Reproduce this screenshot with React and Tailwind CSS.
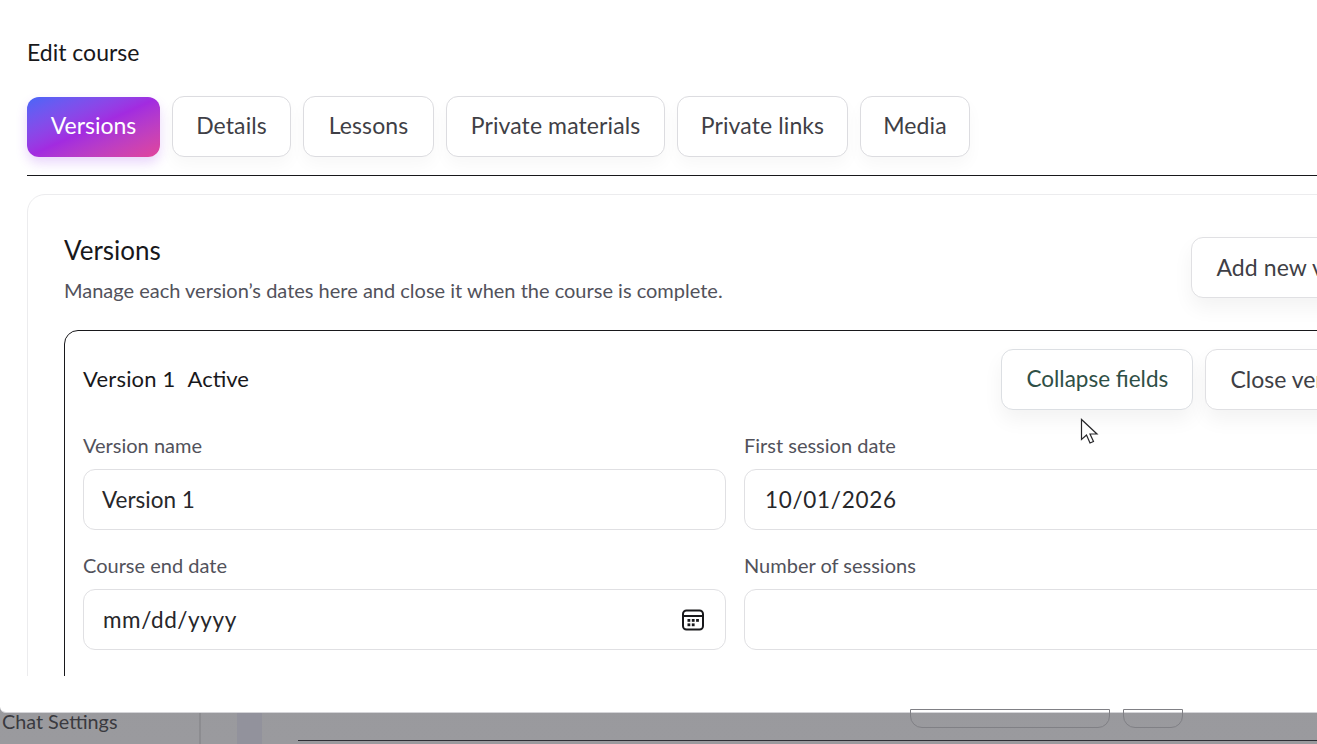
import React from 'react';

const font = { fontFamily: 'Lato, "Open Sans", sans-serif' };

const tabs = [
  { label: 'Details', width: 'w-[119px]' },
  { label: 'Lessons', width: 'w-[131px]' },
  { label: 'Private materials', width: 'w-[219px]' },
  { label: 'Private links', width: 'w-[171px]' },
  { label: 'Media', width: 'w-[110px]' },
];

const Field = ({ label, value, valueClassName, children }) => (
  <div className="flex flex-col">
    <label className="text-[20px] leading-[28px] text-[#52525b] mb-[10px]">{label}</label>
    <div className="h-[61px] rounded-[12px] border border-[#e0e0e3] bg-white flex items-center justify-between pl-[18px] pr-[20px] text-[22.5px] text-[#27272a]">
      <span className={valueClassName}>{value}</span>
      {children}
    </div>
  </div>
);

const CalendarIcon = () => (
  <svg width="24" height="24" viewBox="0 0 24 24" fill="none" stroke="#18181b" strokeWidth="2">
    <rect x="2" y="2.5" width="20" height="19" rx="3.5" />
    <path d="M2 8h20" />
    <g fill="#18181b" stroke="none">
      <rect x="6.5" y="11" width="2.8" height="2.8" />
      <rect x="10.8" y="11" width="2.8" height="2.8" />
      <rect x="15.1" y="11" width="2.8" height="2.8" />
      <rect x="6.5" y="15.4" width="2.8" height="2.8" />
      <rect x="10.8" y="15.4" width="2.8" height="2.8" />
    </g>
  </svg>
);

const Cursor = () => (
  <svg className="absolute left-[1080px] top-[418px]" width="20" height="28" viewBox="0 0 20 28" fill="white" stroke="#27272a" strokeWidth="1.2">
    <path d="M1.5 1.5v20l5-4.5 3.5 8 3.5-1.5-3.5-7.5h7z" />
  </svg>
);

export default function App() {
  return (
    <div className="relative h-[744px] w-[1317px] overflow-hidden bg-gradient-to-b from-[#929295] to-[#9a9a9e]" style={font}>
      <div className="h-[713px] bg-white rounded-bl-[6px] border-b border-[#d4d4d8] overflow-hidden">
        <div className="h-[676px] w-[1500px] overflow-hidden pl-[27px] pt-[35px]">
          <h2 className="text-[23px] leading-[34px] text-[#18181b]">Edit course</h2>

          <div className="mt-[27px] flex w-[1290px] gap-[12px] pb-[18px] border-b border-[#18181b]">
            <button className="mt-[1px] h-[60px] w-[133px] pb-[3px] rounded-[12px] text-[23px] text-white bg-gradient-to-br from-[#4466f8] via-[#a22be0] to-[#e2439a] shadow-[0_6px_12px_rgba(147,51,234,0.2)]">
              Versions
            </button>
            {tabs.map((t) => (
              <button key={t.label} className={`${t.width} h-[61px] pb-[3px] rounded-[12px] border border-[#dcdce0] bg-white text-[23px] tracking-[0.1px] text-[#3f3f46] shadow-[0_8px_16px_rgba(0,0,0,0.03)]`}>
                {t.label}
              </button>
            ))}
          </div>

          <div className="mt-[18px] w-[1421px] rounded-t-[18px] border border-[#ececee] px-[36px] pt-[40px] pb-[40px]">
            <div className="flex items-start justify-between">
              <div>
                <h3 className="text-[26px] leading-[30px] text-[#18181b]">Versions</h3>
                <p className="mt-[11px] text-[20px] leading-[28px] text-[#52525b]">Manage each version’s dates here and close it when the course is complete.</p>
              </div>
              <button className="mt-[2px] h-[61px] px-[24px] pb-[1px] rounded-[12px] border border-[#e0e0e3] bg-white text-[23px] tracking-[0.1px] text-[#3f3f46] shadow-[0_10px_20px_rgba(0,0,0,0.05)]">
                Add new version
              </button>
            </div>

            <div className="mt-[26px] rounded-t-[14px] border border-[#18181b] px-[18px] pt-[18px] pb-[30px]">
              <div className="flex items-center justify-between">
                <div className="flex gap-[12px] pb-[2px] text-[22px] text-[#18181b]">
                  <span className="tracking-[0.2px]">Version 1</span>
                  <span>Active</span>
                </div>
                <div className="flex gap-[12px] mr-[2px]">
                  <button className="h-[61px] w-[192px] pb-[1px] rounded-[12px] border border-[#dcdfe3] bg-white text-[22.5px] text-[#2f4f46] shadow-[0_10px_20px_rgba(0,0,0,0.05)]">
                    Collapse fields
                  </button>
                  <button className="h-[61px] px-[24px] pb-[1px] rounded-[12px] border border-[#e0e0e3] bg-white text-[23px] text-[#3f3f46] shadow-[0_10px_20px_rgba(0,0,0,0.05)]">
                    Close version
                  </button>
                </div>
              </div>

              <div className="mt-[21px] grid grid-cols-[643px_643px] gap-x-[18px] gap-y-[21px]">
                <Field label="Version name" value="Version 1" valueClassName="" />
                <Field label="First session date" value="10/01/2026" valueClassName="pl-[2px] tracking-[0.7px]" />
                <Field label="Course end date" value="mm/dd/yyyy" valueClassName="pl-[1px] tracking-[0.6px]">
                  <CalendarIcon />
                </Field>
                <Field label="Number of sessions" value="" />
              </div>
            </div>
          </div>
        </div>
      </div>

      <div className="relative h-[31px] text-[#3a3a40]">
        <span className="absolute left-[2px] top-[-6px] text-[19.8px] leading-[28px]">Chat Settings</span>
        <div className="absolute left-[199px] top-0 h-full w-[2px] bg-[#8c8c90]" />
        <div className="absolute left-[237px] top-0 h-full w-[25px] bg-[#92929c]" />
        <div className="absolute left-[910px] top-[-4px] h-[19px] w-[200px] rounded-b-[12px] border border-[#808085]" />
        <div className="absolute left-[1123px] top-[-4px] h-[19px] w-[60px] rounded-b-[12px] border border-[#808085]" />
        <div className="absolute left-[298px] top-[27px] h-px w-[1019px] bg-[#2f2f35]" />
      </div>

      <Cursor />
    </div>
  );
}
